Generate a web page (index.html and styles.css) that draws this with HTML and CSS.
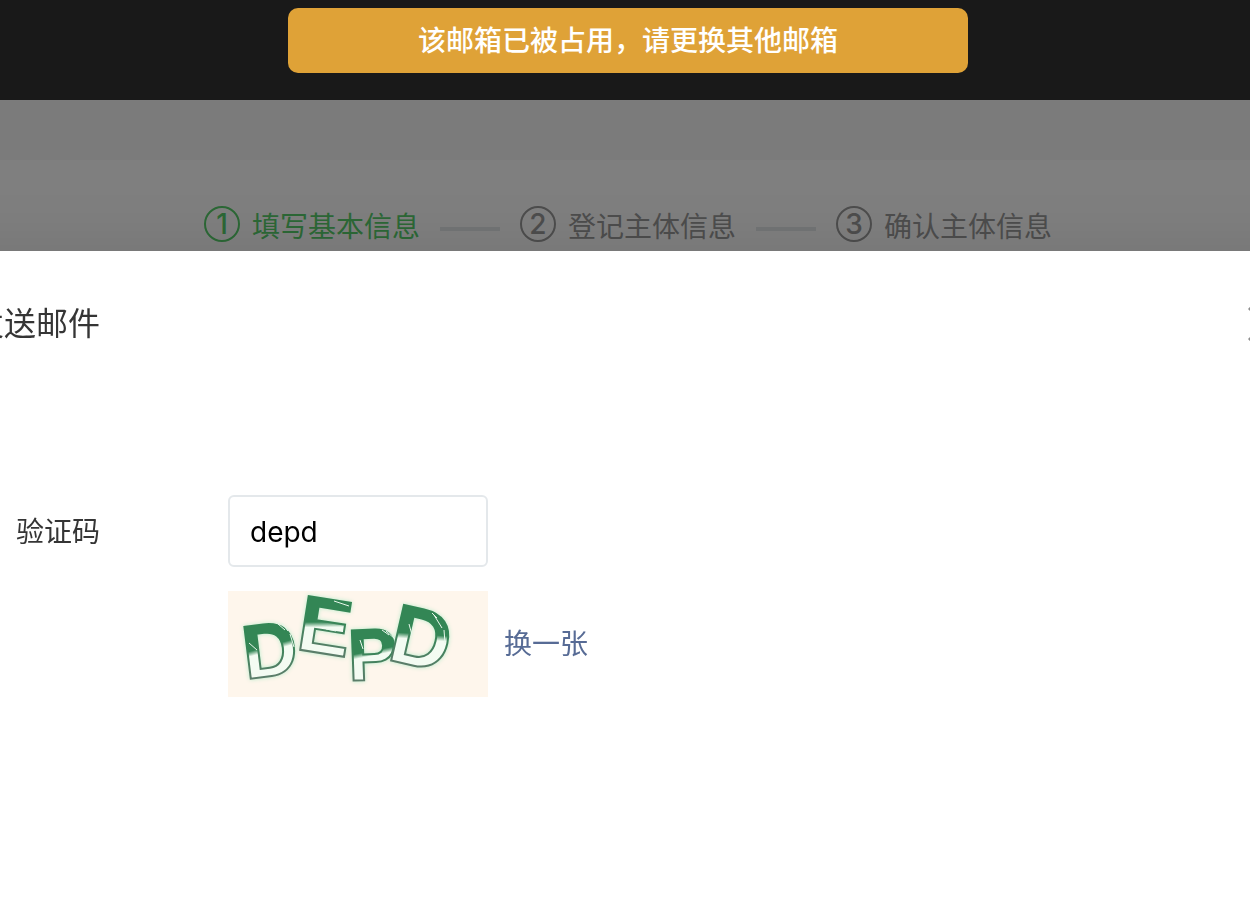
FILE: index.html
```html
<!DOCTYPE html>
<html lang="zh-CN">
<head>
    <meta charset="UTF-8">
    <meta name="viewport" content="width=device-width, initial-scale=1.0">
    <title>填写基本信息</title>
    <link rel="stylesheet" href="styles.css">
</head>
<body>
    <header class="header"></header>

    <main class="panel">
        <ol class="steps">
            <li class="step active"><span class="step-num">1</span>填写基本信息</li>
            <li class="step"><span class="step-num">2</span>登记主体信息</li>
            <li class="step"><span class="step-num">3</span>确认主体信息</li>
        </ol>
    </main>

    <div class="mask"></div>

    <section class="dialog" role="dialog" aria-labelledby="dialogTitle">
        <div class="dialog-head">
            <h2 id="dialogTitle">发送邮件</h2>
            <button class="close" type="button" aria-label="关闭">
                <svg viewBox="0 0 36 36" fill="none" stroke="currentColor" stroke-width="3">
                    <path d="M1 1L35 35M35 1L1 35"/>
                </svg>
            </button>
        </div>
        <form class="form">
            <label class="form-label" for="code">验证码</label>
            <div class="form-controls">
                <input class="code-input" id="code" type="text" value="depd" autocomplete="off">
                <div class="captcha-row">
                    <svg class="captcha" viewBox="0 0 260 106" role="img" aria-label="验证码图片">
                        <defs>
                            <linearGradient id="ink" x1="0" y1="0" x2="0.1" y2="1">
                                <stop offset="0.5" stop-color="#338655"/>
                                <stop offset="0.56" stop-color="#f3fbf2"/>
                            </linearGradient>
                            <linearGradient id="edge" x1="0" y1="0" x2="0" y2="1">
                                <stop offset="0.4" stop-color="#338655"/>
                                <stop offset="0.8" stop-color="#5a7d69"/>
                            </linearGradient>
                        </defs>
                        <g class="captcha-letters" fill="url(#ink)" stroke="url(#edge)">
                            <text x="45" y="85" font-size="76" transform="rotate(-7 45 85)">D</text>
                            <text x="93" y="62" font-size="79" transform="rotate(9 93 62)">E</text>
                            <text x="145" y="89" font-size="73" transform="rotate(-2 145 89)">P</text>
                            <text x="187" y="75" font-size="83" transform="rotate(13 187 75)">D</text>
                        </g>
                        <g fill="none" stroke="#e9f8ec" stroke-width="1">
                            <path d="M50 33l7 6M54 32l6 8M62 43l4 13M21 52l8 7"/>
                            <path d="M106 10l15 5M98 38l10 2"/>
                            <path d="M158 40l9 8M154 39l7 5M132 49l3 9"/>
                            <path d="M206 24l8 13M204 22l5 5M216 39l1 13M181 33l3 11"/>
                        </g>
                    </svg>
                    <a class="refresh" href="#">换一张</a>
                </div>
            </div>
        </form>
    </section>

    <div class="toast" role="alert">该邮箱已被占用，请更换其他邮箱</div>
</body>
</html>
```

FILE: styles.css
```css
:root {
    --green: #58d06c;
    --gray: #9a9a9a;
    --link: #576b95;
    --text: #353535;
}

* {
    margin: 0;
    padding: 0;
    box-sizing: border-box;
}

body {
    display: flex;
    flex-direction: column;
    font-family: Inter, "Noto Sans CJK SC", sans-serif;
    font-size: 28px;
    line-height: 42px;
    color: var(--text);
    background: #f6f6f6;
    min-height: 100vh;
    overflow: hidden;
}

.header {
    height: 100px;
    background: #333;
}

.panel {
    flex: 1;
    margin-top: 60px;
    padding: 46px 0 0 6px;
    background: #fff;
}

.steps {
    display: flex;
    justify-content: center;
    list-style: none;
}

.step {
    display: flex;
    align-items: flex-start;
    color: var(--gray);
}

.step.active {
    color: var(--green);
}

.step-num {
    width: 36px;
    height: 36px;
    margin-right: 12px;
    border: 2px solid currentColor;
    border-radius: 50%;
    font-weight: 500;
    line-height: 32px;
    text-align: center;
}

.step + .step::before {
    content: "";
    width: 60px;
    height: 4px;
    margin: 21px 20px 0;
    background: #e4e8eb;
}

.mask {
    position: fixed;
    inset: 0;
    background: rgba(0, 0, 0, 0.5);
}

/* wider than the window, cut on both sides */
.dialog {
    position: absolute;
    top: 251px;
    left: -72px;
    right: -72px;
    bottom: 0;
    padding: 52px 40px 0 44px;
    background: #fff;
    box-shadow: 0 0 60px rgba(0, 0, 0, 0.1);
}

.dialog-head {
    display: flex;
    justify-content: space-between;
    align-items: center;
}

.dialog-head h2 {
    font-size: 32px;
    font-weight: 400;
    line-height: 42px;
}

.close {
    width: 34px;
    height: 34px;
    border: none;
    background: none;
    color: #8d8d8d;
}

.close svg {
    display: block;
}

.form {
    display: flex;
    margin-top: 150px;
    padding-left: 44px;
}

.form-label {
    width: 212px;
    line-height: 74px;
}

.code-input {
    display: block;
    width: 260px;
    height: 72px;
    padding: 2px 20px 0;
    border: 2px solid #e4e8eb;
    border-radius: 6px;
    font: inherit;
    color: #000;
    background: #fff;
    outline: none;
}

.captcha-row {
    display: flex;
    align-items: center;
    gap: 16px;
    margin-top: 24px;
}

.captcha {
    width: 260px;
    height: 106px;
    background: #fef6ec;
}

.captcha-letters {
    font-family: "Liberation Sans", Arial, sans-serif;
    font-weight: 700;
    text-anchor: middle;
    stroke-width: 2;
    filter: blur(0.5px) drop-shadow(0 0 2px #b8eccb);
}

.refresh {
    color: var(--link);
    text-decoration: none;
}

.toast {
    position: fixed;
    top: 8px;
    left: 288px;
    right: 282px;
    padding: 12px 20px 11px;
    border-radius: 10px;
    background: #dfa237;
    color: #fff;
    font-weight: 500;
    text-align: center;
}
```
